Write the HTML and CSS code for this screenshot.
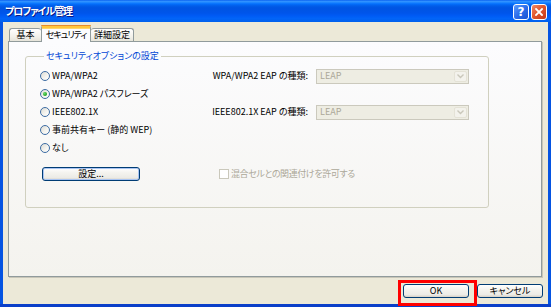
FILE: index.html
```html
<!DOCTYPE html>
<html lang="ja">
<head>
<meta charset="utf-8">
<title>プロファイル管理</title>
<link rel="stylesheet" href="styles.css">
</head>
<body>
<div class="window">
  <div class="titlebar">
    <span class="title">プロファイル管理</span>
    <div class="caption-buttons">
      <span class="cap-btn help">?</span>
      <span class="cap-btn close">
        <svg width="8" height="8" viewBox="0 0 8 8"><path d="M1 1 L7 7 M7 1 L1 7" stroke="#fff" stroke-width="1.8" stroke-linecap="square"/></svg>
      </span>
    </div>
  </div>
  <div class="frame">
    <div class="tabs">
      <div class="tab tab-basic">基本</div>
      <div class="tab tab-active">セキュリティ</div>
      <div class="tab tab-detail">詳細設定</div>
    </div>
    <div class="panel">
      <fieldset class="group">
        <legend class="group-title">セキュリティオプションの設定</legend>
        <div class="options">
          <label class="radio row1"><span class="rb"></span>WPA/WPA2</label>
          <span class="eap-label row1">WPA/WPA2 EAP の種類:</span>
          <div class="combo row1"><span class="combo-text">LEAP</span><span class="combo-arrow"><svg width="7" height="5" viewBox="0 0 7 5"><path d="M0.5 0.5 L3.5 3.5 L6.5 0.5" fill="none" stroke="#C9C7BA" stroke-width="1.4"/></svg></span></div>

          <label class="radio row2"><span class="rb rb-checked"></span>WPA/WPA2 パスフレーズ</label>

          <label class="radio row3"><span class="rb"></span>IEEE802.1X</label>
          <span class="eap-label row3">IEEE802.1X EAP の種類:</span>
          <div class="combo row3"><span class="combo-text">LEAP</span><span class="combo-arrow"><svg width="7" height="5" viewBox="0 0 7 5"><path d="M0.5 0.5 L3.5 3.5 L6.5 0.5" fill="none" stroke="#C9C7BA" stroke-width="1.4"/></svg></span></div>

          <label class="radio row4"><span class="rb"></span>事前共有キー (静的 WEP)</label>
          <label class="radio row5"><span class="rb"></span>なし</label>
        </div>
        <div class="actions">
          <button class="btn btn-setting">設定...</button>
          <label class="check"><span class="cb"></span>混合セルとの関連付けを許可する</label>
        </div>
      </fieldset>
    </div>
    <div class="footer">
      <button class="btn btn-footer">OK</button>
      <button class="btn btn-footer">キャンセル</button>
    </div>
  </div>
  <div class="highlight"></div>
</div>
</body>
</html>
```

FILE: styles.css
```css
html, body {
  margin: 0;
  padding: 0;
}
body {
  width: 551px;
  height: 307px;
  overflow: hidden;
  font-family: "Noto Sans CJK JP", "Noto Sans", sans-serif;
  font-size: 9px;
  line-height: 12px;
  font-feature-settings: "palt";
  color: #000;
}
.window {
  position: relative;
  width: 551px;
  height: 307px;
  box-sizing: border-box;
  background: #0554E2;
  border-bottom: 3px solid #0A3FC9;
  display: flex;
  flex-direction: column;
}
.titlebar {
  height: 22px;
  flex: none;
  display: flex;
  align-items: center;
  justify-content: space-between;
  padding: 0 4px 0 5px;
  background: linear-gradient(to bottom, #0058EE 0%, #3593FF 5%, #288EFF 9%, #127DFF 14%, #036FFC 18%, #0262EE 24%, #0057E5 32%, #0054E3 40%, #0055EB 60%, #005BF5 72%, #0264F8 84%, #0060EC 100%);
}
.title {
  color: #fff;
  font-weight: bold;
  font-size: 10px;
  line-height: 12px;
  letter-spacing: -1px;
  text-shadow: 1px 1px 0 #0A1883;
}
.caption-buttons {
  display: flex;
  gap: 2px;
  margin-top: 1px;
}
.cap-btn {
  width: 16px;
  height: 16px;
  box-sizing: border-box;
  border: 1px solid #fff;
  border-radius: 3px;
  display: flex;
  align-items: center;
  justify-content: center;
  color: #fff;
  font-family: "DejaVu Sans", sans-serif;
  font-weight: bold;
  font-size: 12px;
  line-height: 12px;
}
.help {
  background: linear-gradient(135deg, #5C9CFF 0%, #2B6DEA 50%, #1A52D2 100%);
}
.close {
  background: linear-gradient(135deg, #F08A6A 0%, #E2582F 45%, #C2381A 100%);
}
.frame {
  flex: 1;
  margin: 0 3px;
  background: #ECE9D8;
  padding-top: 4px;
  display: flex;
  flex-direction: column;
}
.tabs {
  height: 16px;
  display: flex;
  align-items: flex-end;
  margin-left: 6px;
  margin-bottom: -1px;
}
.tab {
  box-sizing: border-box;
  height: 13px;
  margin-bottom: 1px;
  border: 1px solid #919B9C;
  border-bottom: none;
  border-radius: 3px 3px 0 0;
  background: linear-gradient(#FFFFFF, #F3F2EC 60%, #E6E4DA);
  text-align: center;
  line-height: 11px;
  font-size: 9px;
  white-space: nowrap;
}
.tab-basic { width: 32px; border-right: none; }
.tab-detail { width: 43px; border-left: none; }
.tab-active {
  position: relative;
  z-index: 1;
  width: 50px;
  height: 17px;
  margin-bottom: 0;
  background: #FCFCFE;
  border-top: 3px solid #FFC73C;
  box-shadow: inset 0 1px 0 #FFD66B;
  border-radius: 2px 2px 0 0;
  line-height: 13px;
  letter-spacing: -1px;
}
.tab-active::before {
  content: "";
  position: absolute;
  left: -1px;
  right: -1px;
  top: -3px;
  height: 1px;
  background: #E68B2C;
  border-radius: 2px 2px 0 0;
}
.panel {
  box-sizing: border-box;
  height: 236px;
  margin: 0 6px 0 5px;
  border: 1px solid #919B9C;
  box-shadow: 1px 1px 0 #C8C6B8;
  background: linear-gradient(#FCFCFE, #F4F3EE);
  padding: 8px 0 0 16px;
}
.group {
  box-sizing: border-box;
  width: 464px;
  margin: 0;
  padding: 5px 19px 26px 14px;
  border: 1px solid #D0D0BF;
  border-radius: 3px;
  min-inline-size: 0;
}
.group-title {
  padding: 0 2px;
  margin-left: 4px;
  color: #0046D5;
  font-size: 9px;
  line-height: 12px;
}
.options {
  display: grid;
  grid-template-columns: 1fr auto 153px;
  grid-template-rows: repeat(5, 18px);
  column-gap: 8px;
  align-items: center;
}
.row1 { grid-row: 1; }
.row2 { grid-row: 2; }
.row3 { grid-row: 3; }
.row4 { grid-row: 4; }
.row5 { grid-row: 5; }
.radio {
  grid-column: 1;
  display: flex;
  align-items: center;
  white-space: nowrap;
}
.rb {
  width: 10px;
  height: 10px;
  box-sizing: border-box;
  border: 1px solid #3D6CA3;
  border-radius: 50%;
  background: linear-gradient(135deg, #DCDBD3 0%, #F4F3EE 55%, #FFFFFF 100%);
  margin-right: 2px;
  display: flex;
  align-items: center;
  justify-content: center;
}
.rb-checked::after {
  content: "";
  width: 4px;
  height: 4px;
  border-radius: 50%;
  background: radial-gradient(circle at 35% 35%, #6BDC6B, #21A121 70%);
}
.eap-label {
  grid-column: 2;
  text-align: right;
  white-space: nowrap;
}
.combo {
  grid-column: 3;
  box-sizing: border-box;
  height: 15px;
  border: 1px solid #CBC9BD;
  background: #EEEDE3;
  display: flex;
  align-items: center;
  justify-content: space-between;
  padding-left: 3px;
}
.combo-text {
  color: #ACA899;
}
.combo-arrow {
  width: 13px;
  height: 11px;
  margin-right: 1px;
  box-sizing: border-box;
  border: 1px solid #E4E2D6;
  border-radius: 2px;
  background: #F3F2EC;
  display: flex;
  align-items: center;
  justify-content: center;
}
.actions {
  display: flex;
  align-items: center;
  margin-top: 10px;
}
.btn {
  box-sizing: border-box;
  height: 14px;
  padding: 0;
  border: 1px solid #003C74;
  border-radius: 3px;
  background: linear-gradient(#FFFFFF 0%, #F4F3EE 40%, #ECEBE6 80%, #D6D0C5 100%);
  font-family: inherit;
  font-size: 9px;
  line-height: 12px;
  font-feature-settings: "palt";
  color: #000;
  text-align: center;
}
.btn-setting {
  width: 98px;
  margin-left: 2px;
  box-shadow: inset 0 0 0 1px #A9C4F2;
}
.check {
  display: flex;
  align-items: center;
  margin-left: 79px;
  color: #ACA899;
  white-space: nowrap;
  letter-spacing: -0.4px;
}
.cb {
  width: 10px;
  height: 10px;
  box-sizing: border-box;
  border: 1px solid #CAC8BB;
  background: #FFFFFF;
  margin-right: 2px;
}
.footer {
  display: flex;
  justify-content: flex-end;
  gap: 8px;
  margin-top: 7px;
  padding-right: 5px;
}
.btn-footer {
  width: 66px;
}
.highlight {
  position: absolute;
  left: 398px;
  top: 280px;
  width: 79px;
  height: 26px;
  box-sizing: border-box;
  border: 3px solid #FF0000;
}
```
